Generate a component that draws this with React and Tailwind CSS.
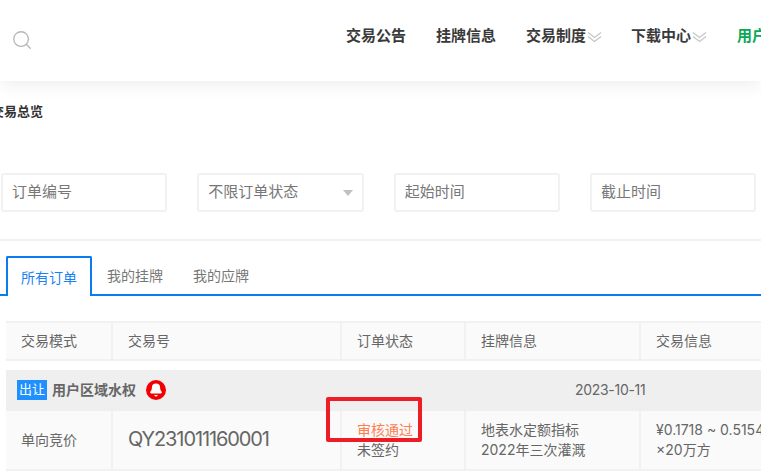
import { Search, Bell } from "lucide-react";

const font = "font-['Inter','Noto_Sans_CJK_SC',sans-serif]";

function DoubleChevron() {
  return (
    <svg width="15" height="12" viewBox="0 0 15 12" fill="none" stroke="#c4c4c4" strokeWidth="1.1" className="ml-px">
      <path d="M1 1.5 L7.5 6.5 L14 1.5" />
      <path d="M1 5.5 L7.5 10.5 L14 5.5" />
    </svg>
  );
}

function Field({ text, arrow }) {
  return (
    <div className="w-[166.33px] h-[39px] shrink-0 flex items-center justify-between pl-[9px] pr-[9px] border-2 border-[#f1f1f1] rounded-[3px] text-[15px] text-[#777]">
      <span>{text}</span>
      {arrow && <span className="w-0 h-0 border-x-[5px] border-x-transparent border-t-[6px] border-t-[#c0c0c0]" />}
    </div>
  );
}

function NavItem({ text, more, green }) {
  return (
    <div className={`flex items-center shrink-0 text-[15px] font-bold ${green ? "text-[#0aa858]" : "text-[#3a3a3a]"}`}>
      <span>{text}</span>
      {more && <DoubleChevron />}
    </div>
  );
}

const cols = "grid grid-cols-[107px_229px_124px_175px_260px] w-[895px]";

function Cell({ children, className = "" }) {
  return <div className={`px-[15px] border-r-2 border-[#f1f1f1] flex flex-col justify-center ${className}`}>{children}</div>;
}

export default function App() {
  return (
    <div className={`relative w-[761px] h-[472px] overflow-hidden bg-white ${font}`}>
      <header className="h-[81px] bg-white shadow-[0_4px_16px_rgba(0,0,0,0.07)] flex items-center pl-[11px] pb-[8px]">
        <Search size={22} color="#b5b5b5" strokeWidth={1.4} className="mt-[7px] shrink-0" />
        <nav className="flex items-center shrink-0 gap-[30px] ml-[313px]">
          <NavItem text="交易公告" />
          <NavItem text="挂牌信息" />
          <div className="flex shrink-0 gap-[29px]">
            <NavItem text="交易制度" more />
            <NavItem text="下载中心" more />
          </div>
          <NavItem text="用户中心" green />
        </nav>
      </header>

      <h1 className="-ml-[9px] mt-[21px] text-[13px] leading-[18px] font-bold text-[#333]">交易总览</h1>

      <div className="flex gap-[30px] ml-px mt-[53px]">
        <Field text="订单编号" />
        <Field text="不限订单状态" arrow />
        <Field text="起始时间" />
        <Field text="截止时间" />
      </div>

      <div className="h-[2px] bg-[#f1f1f1] mt-[27px]" />

      <div className="flex h-[40px] mt-[15px] border-b-2 border-[#0a7cf0] pl-[6px] text-[14px] text-[#777]">
        <div className="w-[86px] h-[40px] flex items-center justify-center bg-white border-2 border-b-0 border-[#0a7cf0] rounded-t-[2px] text-[#1a82f0]">所有订单</div>
        <div className="w-[86px] flex items-center justify-center">我的挂牌</div>
        <div className="w-[86px] flex items-center justify-center">我的应牌</div>
      </div>

      <div className="ml-[6px] mt-[25px] text-[14px] text-[#666]">
        <div className={`${cols} h-[40px] bg-[#fafafa] border-y-2 border-[#f1f1f1]`}>
          <Cell className="pb-[2px]">交易模式</Cell>
          <Cell className="pb-[2px]">交易号</Cell>
          <Cell className="pb-[2px]">订单状态</Cell>
          <Cell className="pb-[2px]">挂牌信息</Cell>
          <Cell className="pb-[2px]">交易信息</Cell>
        </div>
        <div className="w-[895px] h-[41px] mt-[9px] bg-[#efefef] flex items-center pl-[11px] pb-[2px]">
          <span className="w-[30px] h-[20px] flex items-center justify-center bg-[#1e90ff] text-white text-[13px]">出让</span>
          <span className="ml-[5px] font-bold w-[83px] whitespace-nowrap">用户区域水权</span>
          <span className="ml-[11px] w-[20px] h-[20px] rounded-full bg-[#f00000] flex items-center justify-center">
            <Bell size={14} color="white" fill="white" strokeWidth={2} />
          </span>
          <span className="ml-[409px] tracking-[-0.3px]">2023-10-11</span>
        </div>
        <div className={`${cols} h-[60px] bg-[#fafafa] border-b-2 border-[#f1f1f1]`}>
          <Cell className="pb-[2px]">单向竞价</Cell>
          <Cell className="pb-[2px] text-[20px] tracking-[-1.1px]">QY231011160001</Cell>
          <Cell className="leading-[20px]">
            <span className="text-[#ff7f50]">审核通过</span>
            <span>未签约</span>
          </Cell>
          <Cell className="leading-[20px]">
            <span>地表水定额指标</span>
            <span>2022年三次灌溉</span>
          </Cell>
          <Cell className="leading-[20px] whitespace-nowrap">
            <span>¥0.1718 ~ 0.5154</span>
            <span>×20万方</span>
          </Cell>
        </div>
      </div>

      <div className="absolute left-[326px] top-[397px] w-[96px] h-[45px] border-4 border-[#ee1c25] rounded-[2px]" />
    </div>
  );
}
